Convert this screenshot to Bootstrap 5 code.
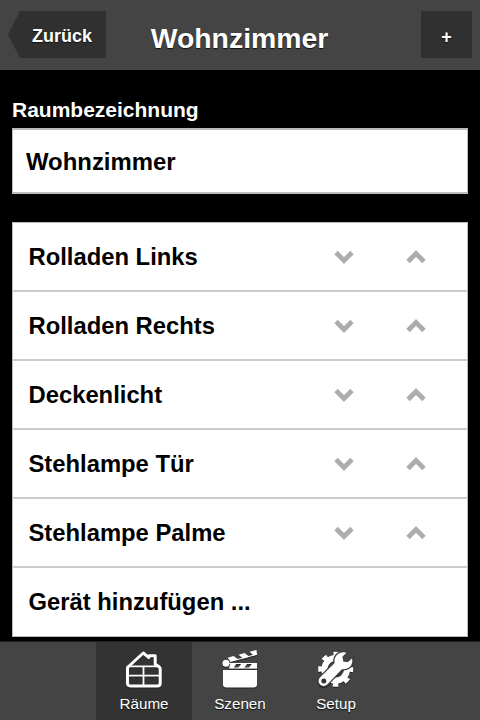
<!DOCTYPE html>
<html lang="de">
<head>
<meta charset="utf-8">
<meta name="viewport" content="width=device-width, initial-scale=1">
<title>Wohnzimmer</title>
<link href="https://cdn.jsdelivr.net/npm/bootstrap@5.3.0/dist/css/bootstrap.min.css" rel="stylesheet">
<style>
body{font-family:"Liberation Sans",Arial,sans-serif;background:#000;height:720px;line-height:1.2}
.topbar{height:70px;background:#444;padding:11px 8px 12px;text-shadow:0 1px 1px #111}
.topbar .btn{border-radius:0;border:0;background:#303030;color:#fff;font-weight:700;text-shadow:inherit;height:47px}
.topbar .back{width:98px;font-size:18px;padding:3px 0 0 10px;clip-path:polygon(0 50%,12px 0,100% 0,100% 100%,12px 100%)}
.topbar .plus{width:51px;font-size:18px;padding:5px 0 0}
.topbar h1{font-size:28.4px;padding:10px 48px 0 0}
.room{padding:28px 12px 0}
.room label{font-size:21px;line-height:24px;height:30px;color:#fff;font-weight:700}
.room .form-control{height:66px;font-size:23.9px;font-weight:700;color:#000;border:2px solid #bbb;border-left-width:1px;border-right-width:1px;padding:2px 13px 0}
.devices{margin-top:28px;border:1px solid #bbb}
.devices .list-group-item{height:69px;font-size:23.8px;font-weight:700;color:#000;padding:2px 0 0 15.500px;border:0;border-bottom:2px solid #ccc}
.devices .list-group-item:last-child{height:68px;border-bottom-color:#fff}
.arrow{width:72px;transform:translate(1px,-1px)}
.arrow path{fill:none;stroke:#adadad;stroke-width:4.8}
.tabs{height:79px;background:#444;border-top:1px solid #222;font-size:15.2px}
.tabs .nav-link{width:96px;color:#fff;padding:8px 0 0;text-shadow:0 1px 1px #111}
.tabs .nav-link.active{background:#333}
.tabs svg{filter:drop-shadow(0 1px 0 #222)}
.tabs span{line-height:18px;margin-top:5px}
</style>
<script src="https://cdn.jsdelivr.net/npm/bootstrap@5.3.0/dist/js/bootstrap.bundle.min.js"></script>
</head>
<body class="d-flex flex-column overflow-hidden">
<header class="topbar d-flex justify-content-between flex-shrink-0">
  <button class="btn back">Zurück</button>
  <h1 class="text-white fw-bold m-0 flex-grow-1 text-center">Wohnzimmer</h1>
  <button class="btn plus">+</button>
</header>
<main class="room flex-grow-1">
  <label class="d-block" for="name">Raumbezeichnung</label>
  <input id="name" class="form-control rounded-0" value="Wohnzimmer">
  <ul class="devices list-group rounded-0">
    <li class="list-group-item d-flex align-items-center"><span class="me-auto">Rolladen Links</span><svg class="arrow" height="14" viewBox="0 0 72 14"><path d="M28 2.500l8 8 8-8"/></svg><svg class="arrow me-3" height="14" viewBox="0 0 72 14"><path d="M28 11.500l8-8 8 8"/></svg></li>
    <li class="list-group-item d-flex align-items-center"><span class="me-auto">Rolladen Rechts</span><svg class="arrow" height="14" viewBox="0 0 72 14"><path d="M28 2.500l8 8 8-8"/></svg><svg class="arrow me-3" height="14" viewBox="0 0 72 14"><path d="M28 11.500l8-8 8 8"/></svg></li>
    <li class="list-group-item d-flex align-items-center"><span class="me-auto">Deckenlicht</span><svg class="arrow" height="14" viewBox="0 0 72 14"><path d="M28 2.500l8 8 8-8"/></svg><svg class="arrow me-3" height="14" viewBox="0 0 72 14"><path d="M28 11.500l8-8 8 8"/></svg></li>
    <li class="list-group-item d-flex align-items-center"><span class="me-auto">Stehlampe Tür</span><svg class="arrow" height="14" viewBox="0 0 72 14"><path d="M28 2.500l8 8 8-8"/></svg><svg class="arrow me-3" height="14" viewBox="0 0 72 14"><path d="M28 11.500l8-8 8 8"/></svg></li>
    <li class="list-group-item d-flex align-items-center"><span class="me-auto">Stehlampe Palme</span><svg class="arrow" height="14" viewBox="0 0 72 14"><path d="M28 2.500l8 8 8-8"/></svg><svg class="arrow me-3" height="14" viewBox="0 0 72 14"><path d="M28 11.500l8-8 8 8"/></svg></li>
    <li class="list-group-item d-flex align-items-center"><span>Gerät hinzufügen ...</span></li>
  </ul>
</main>
<nav class="tabs nav justify-content-center flex-shrink-0">
  <a class="nav-link active d-flex flex-column align-items-center" href="#">
    <svg width="40" height="40" viewBox="0 0 40 40" fill="none" stroke="#fff" stroke-linejoin="round">
      <path stroke-width="3" d="M3.500 17.500L19.300 3l5.500 4.600V5.800h6.400v8.400l3.800 2.600q1.200.8 1.200 2.500v13.900q0 2.800-2.800 2.800H6.300q-2.800 0-2.800-2.800z"/>
      <path stroke-width="1.800" d="M3.500 16.300h32M3.500 25.600h33M19.500 16v20"/>
    </svg><span>Räume</span></a>
  <a class="nav-link d-flex flex-column align-items-center" href="#">
    <svg width="40" height="40" viewBox="0 0 40 40" fill="#fff">
      <path d="M3 20h34v14.200q0 3.300-3.300 3.300H6.300Q3 37.500 3 34.200z"/>
      <circle cx="6" cy="13.200" r="3.500"/>
      <path d="M9 18.300l1.500-4.800H16.500l-3 4.800zM18 18.300l3.500-4.800h6l-3.500 4.800zM28.600 18.300l3.500-4.800H37v4.800z"/>
      <path d="M7.700 7.700L13.500 6.100 18.500 9.600 12 11.300 9.500 10.500zM18.500 4.800L24.500 3.100 29.400 6.700 23 8.400zM29.600 1.700L36.500 0 37 4.700l-3.500.8z"/>
      <path fill="none" stroke="#fff" stroke-width="1" d="M10 11.600L37 4.300M9.500 18h27.500M9.500 13.500h27.500"/>
    </svg><span>Szenen</span></a>
  <a class="nav-link d-flex flex-column align-items-center" href="#">
    <svg width="40" height="40" viewBox="0 0 40 40" fill="#fff">
      <circle cx="19.700" cy="19.300" r="11.300" fill="none" stroke="#fff" stroke-width="6"/>
      <circle cx="19.700" cy="19.300" r="15.500" fill="none" stroke="#fff" stroke-width="4" stroke-dasharray="5.500 6.674" stroke-dashoffset="2.750"/>
      <path d="M4 27.600L18.500 13.200Q17.800 7 22 3.900 26 1.400 30.600 2.800L26.500 6.800 27.300 11.300 31.600 12.200 36 8.300Q37.300 13.900 33.500 17.300 30.300 19.700 25.800 19.200L11.400 34.200Q7.700 37.500 4.100 34.500 1.200 31.300 4 27.600z" stroke="#444" stroke-width="2.600" paint-order="stroke"/>
      <path fill="#444" d="M31 2.200l-4.400 4.600.8 4.400 4.200.9 4.800-4.300L38.500 6 33 0z"/>
      <circle cx="7.800" cy="31" r="2.500" fill="#333"/>
    </svg><span>Setup</span></a>
</nav>
</body>
</html>
